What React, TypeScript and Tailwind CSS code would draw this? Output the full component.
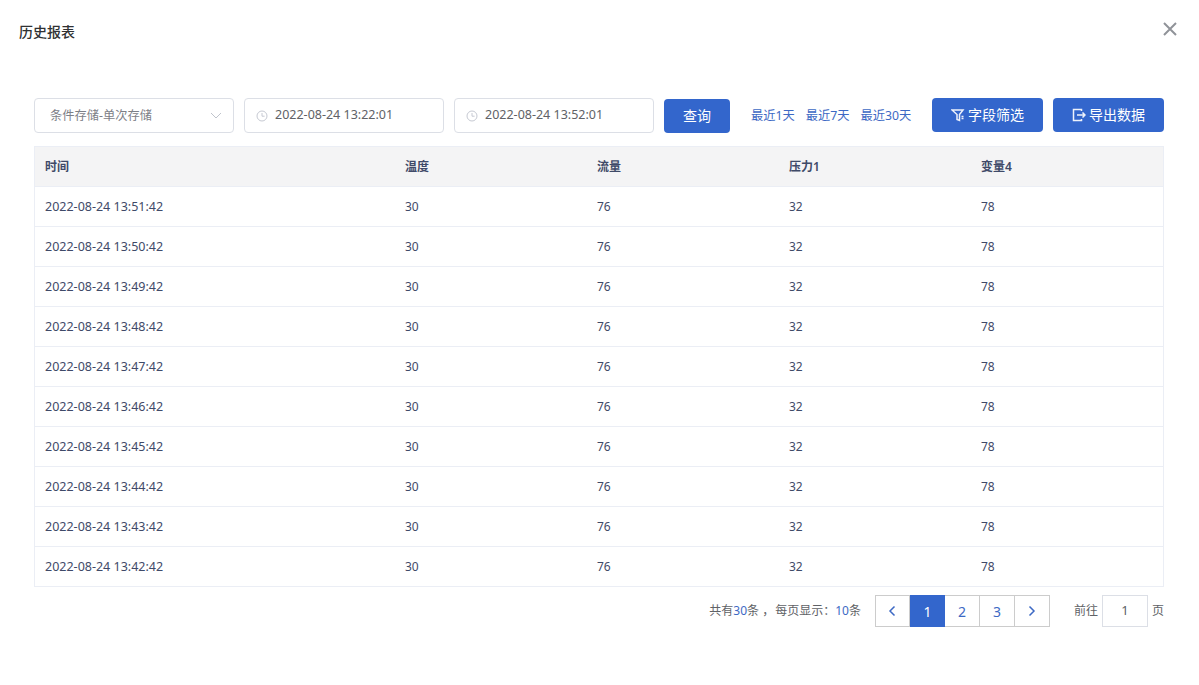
import React from "react";

const rows = ["51","50","49","48","47","46","45","44","43","42"];

function Clock() {
  return (
    <svg width="12" height="12" viewBox="0 0 12 12" fill="none" stroke="#c6c9d2" strokeWidth="1" className="shrink-0">
      <circle cx="6" cy="6" r="5" />
      <path d="M6 3v3.2h2.6" />
    </svg>
  );
}

function DateBox({ value }: { value: string }) {
  return (
    <div className="w-[200px] h-[35px] border border-[#dcdfe6] rounded-[4px] flex items-center pl-[11px] gap-[7px] text-[12.5px] text-[#606266]">
      <Clock />
      <span>{value}</span>
    </div>
  );
}

function Cell({ w, children, head }: { w: string; children: React.ReactNode; head?: boolean }) {
  return (
    <div className={`${w} pl-[10px] ${head ? "font-semibold" : ""}`}>{children}</div>
  );
}

export default function App() {
  return (
    <div className="relative w-[1199px] h-[685px] bg-white overflow-hidden font-['Noto_Sans','Noto_Sans_CJK_SC',sans-serif]">
      <div className="pl-[19px] pt-[22px] pr-[35px]">
        <div className="flex justify-between">
          <div className="text-[14px] leading-[20px] font-medium text-[#303133]">历史报表</div>
          <svg width="14" height="14" viewBox="0 0 14 14" stroke="#909399" strokeWidth="2" className="mr-[-13px]">
            <path d="M1 1l12 12M13 1L1 13" />
          </svg>
        </div>
      </div>

      <div className="pl-[34px] pr-[35px] mt-[56px]">
        <div className="flex items-start">
          <div className="w-[200px] h-[35px] border border-[#dcdfe6] rounded-[4px] flex items-center justify-between pl-[15px] pr-[11px] text-[12.25px] text-[#7d8087]">
            <span className="pt-[2px]">条件存储-单次存储</span>
            <svg width="12" height="7" viewBox="0 0 12 7" fill="none" stroke="#c0c4cc" strokeWidth="1">
              <path d="M1 1l5 5 5-5" />
            </svg>
          </div>
          <div className="w-[10px]" />
          <DateBox value="2022-08-24 13:22:01" />
          <div className="w-[10px]" />
          <DateBox value="2022-08-24 13:52:01" />
          <button className="ml-[10px] w-[66px] h-[34px] mt-px pb-[2px] bg-[#3366cc] rounded-[4px] text-white text-[14px] flex items-center justify-center">查询</button>
          <div className="ml-[21px] w-[161px] h-[35px] flex items-center gap-[11px] text-[12.25px] text-[#3d69c4] pt-[1px]">
            <span>最近1天</span>
            <span>最近7天</span>
            <span>最近30天</span>
          </div>
          <button className="ml-[20px] w-[111px] h-[34px] bg-[#3366cc] rounded-[4px] text-white text-[14px] flex items-center justify-center gap-[3px]">
            <svg width="14" height="14" viewBox="0 0 14 14" fill="none" stroke="#eef2fb" strokeWidth="1.5">
              <path d="M1 2h11L8.500 6.500V12.500L6 11.500V6.500Z" />
              <path d="M10.500 8.500h2M10.500 10.500h2" />
            </svg>
            <span className="pb-[2px]">字段筛选</span>
          </button>
          <button className="ml-[10px] w-[111px] h-[34px] bg-[#3366cc] rounded-[4px] text-white text-[14px] flex items-center justify-center gap-[3px]">
            <svg width="14" height="14" viewBox="0 0 14 14" fill="none" stroke="#eef2fb" strokeWidth="1.5">
              <path d="M9.500 3V1.500H1.500v11h8V11" />
              <path d="M5 7h8M10.500 4.500L13 7l-2.500 2.500" />
            </svg>
            <span className="pb-[2px]">导出数据</span>
          </button>
        </div>

        <div className="mt-[13px] w-[1130px] border border-[#ebeef5] border-b-0 text-[12px] text-[#3f4a68]">
          <div className="flex items-center h-[40px] bg-[#f4f4f5] border-b border-[#ebeef5]">
            <Cell w="w-[360px]" head>时间</Cell>
            <Cell w="w-[192px]" head>温度</Cell>
            <Cell w="w-[192px]" head>流量</Cell>
            <Cell w="w-[192px]" head>压力1</Cell>
            <Cell w="w-[183px]" head>变量4</Cell>
          </div>
          {rows.map((m) => (
            <div key={m} className="flex items-center h-[40px] border-b border-[#ebeef5]">
              <Cell w="w-[360px]"><div className="text-[12.5px] pt-[2px]">{`2022-08-24 13:${m}:42`}</div></Cell>
              <Cell w="w-[192px]">30</Cell>
              <Cell w="w-[192px]">76</Cell>
              <Cell w="w-[192px]">32</Cell>
              <Cell w="w-[183px]">78</Cell>
            </div>
          ))}
        </div>

        <div className="mt-[8px] w-[1130px] flex items-center justify-end text-[12px] text-[#606266]">
          <span>共有<span className="text-[#3d69c4]">30</span>条 ，<span className="ml-[1px]">每页显示：</span><span className="text-[#3d69c4]">10</span>条</span>
          <div className="ml-[14px] flex h-[32px] border border-[#cccccc] text-[14px] text-[#3d69c4]">
            <div className="w-[34px] flex items-center justify-center border-r border-[#cccccc]">
              <svg width="8" height="12" viewBox="0 0 8 12" fill="none" stroke="#3d69c4" strokeWidth="1.5"><path d="M6.500 1.500L2 6l4.500 4.500" /></svg>
            </div>
            <div className="w-[35px] -my-px flex items-center justify-center bg-[#3366cc] text-white">1</div>
            <div className="w-[35px] flex items-center justify-center border-r border-[#cccccc]">2</div>
            <div className="w-[35px] flex items-center justify-center border-r border-[#cccccc]">3</div>
            <div className="w-[34px] flex items-center justify-center">
              <svg width="8" height="12" viewBox="0 0 8 12" fill="none" stroke="#3d69c4" strokeWidth="1.500"><path d="M1.500 1.500L6 6l-4.500 4.500" /></svg>
            </div>
          </div>
          <span className="ml-[24px]">前往</span>
          <div className="ml-[4px] w-[46px] h-[32px] border border-[#dcdfe6] flex items-center justify-center text-[13px]">1</div>
          <span className="ml-[4px]">页</span>
        </div>
      </div>
    </div>
  );
}
